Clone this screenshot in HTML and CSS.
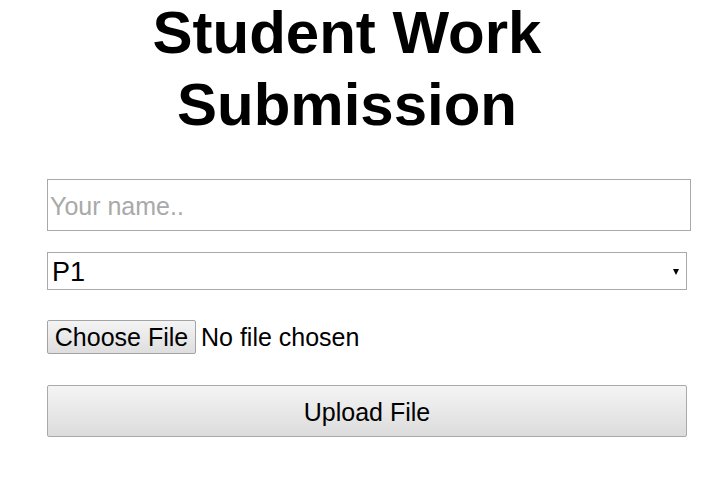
FILE: index.html
```html
<!DOCTYPE html>
<html lang="en">
<head>
<meta charset="utf-8">
<title>Student Work Submission</title>
<link rel="stylesheet" href="styles.css">
</head>
<body>
<div class="page">
  <h1 class="title">Student Work Submission</h1>
  <form class="form">
    <input class="name" type="text" placeholder="Your name..">
    <div class="select-wrap">
      <select class="period">
        <option>P1</option>
        <option>P2</option>
        <option>P3</option>
      </select>
    </div>
    <input class="file" type="file">
    <button class="upload" type="button">Upload File</button>
  </form>
</div>
</body>
</html>
```
FILE: styles.css
```css
html, body {
  margin: 0;
  padding: 0;
  background: #ffffff;
}

body {
  font-family: "Liberation Sans", Arial, sans-serif;
  color: #000;
}

.page {
  width: 694px;
}

.title {
  margin: -3px 0 0;
  font-size: 60px;
  line-height: 72px;
  font-weight: bold;
  text-align: center;
}

.form {
  display: flex;
  flex-direction: column;
  align-items: flex-start;
  padding: 38px 0 0 47px;
}

.name {
  box-sizing: border-box;
  width: 644px;
  height: 52px;
  margin: 0 0 21px;
  padding: 2px 2px 0;
  border: 1px solid #a9a9a9;
  border-radius: 0;
  font-family: "Liberation Sans", Arial, sans-serif;
  font-size: 25px;
  color: #000;
  outline: none;
}

.name::placeholder {
  color: #a9a9a9;
}

.select-wrap {
  position: relative;
  width: 640px;
  height: 38px;
  margin: 0 0 30px;
}

.select-wrap::after {
  content: "";
  position: absolute;
  right: 8px;
  top: 17px;
  width: 0;
  height: 0;
  border-left: 3px solid transparent;
  border-right: 3px solid transparent;
  border-top: 6px solid #000;
  pointer-events: none;
}

.period {
  appearance: none;
  -webkit-appearance: none;
  box-sizing: border-box;
  width: 100%;
  height: 38px;
  margin: 0;
  padding: 1px 0 0 4px;
  border: 1px solid #a9a9a9;
  border-radius: 0;
  background: #fff;
  font-family: "Liberation Sans", Arial, sans-serif;
  font-size: 27px;
  color: #000;
}

.file {
  height: 34px;
  margin: 0 0 31px;
  padding: 0;
  font-family: "Liberation Sans", Arial, sans-serif;
  font-size: 25px;
  color: #000;
}

.file::file-selector-button {
  box-sizing: border-box;
  width: 149px;
  height: 34px;
  margin: 0 5px 0 0;
  padding: 0;
  border: 1px solid #a3a3a3;
  border-radius: 2px;
  background: linear-gradient(#f4f4f4, #dedede);
  font-family: "Liberation Sans", Arial, sans-serif;
  font-size: 25px;
  color: #000;
}

.upload {
  box-sizing: border-box;
  width: 640px;
  height: 52px;
  margin: 0;
  padding: 2px 0 0;
  border: 1px solid #a9a9a9;
  border-radius: 2px;
  background: linear-gradient(#f4f4f4, #dcdcdc);
  font-family: "Liberation Sans", Arial, sans-serif;
  font-size: 25px;
  color: #000;
}
```
